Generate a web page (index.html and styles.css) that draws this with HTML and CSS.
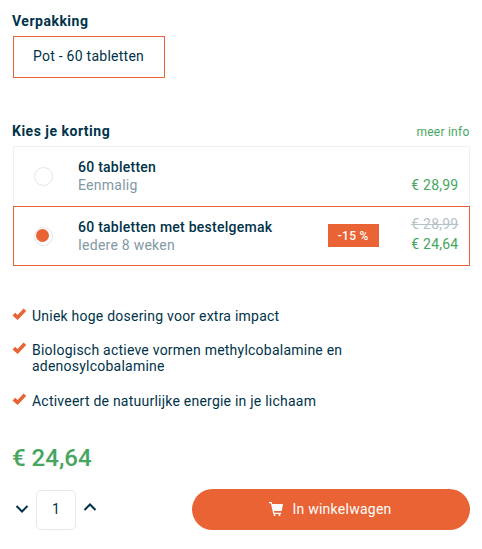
FILE: index.html
```html
<!DOCTYPE html>
<html lang="nl">
<head>
    <meta charset="UTF-8">
    <meta name="viewport" content="width=device-width, initial-scale=1.0">
    <title>Product bestellen</title>
    <link rel="stylesheet" href="styles.css">
</head>
<body>
    <form class="product-form">
        <h2>Verpakking</h2>
        <div class="package">Pot - 60 tabletten</div>

        <div class="discount-header">
            <h2>Kies je korting</h2>
            <a class="more-info">meer info</a>
        </div>

        <div class="options">
            <label class="option">
                <span class="radio"></span>
                <span class="option-text">
                    <strong>60 tabletten</strong>
                    <span class="option-sub">Eenmalig</span>
                </span>
                <span class="prices">
                    <span class="price">€ 28,99</span>
                </span>
            </label>
            <label class="option active">
                <span class="radio"></span>
                <span class="option-text">
                    <strong>60 tabletten met bestelgemak</strong>
                    <span class="option-sub">Iedere 8 weken</span>
                </span>
                <span class="badge">-15 %</span>
                <span class="prices">
                    <del class="old-price">€ 28,99</del>
                    <span class="price">€ 24,64</span>
                </span>
            </label>
        </div>

        <ul class="usps">
            <li>
                <svg class="check" viewBox="0 0 14 12"><path d="M.5 7.500 3.200 4.700 5.600 7.100 11.600.5 14.200 3 5.600 12z"/></svg>
                <span>Uniek hoge dosering voor extra impact</span>
            </li>
            <li>
                <svg class="check" viewBox="0 0 14 12"><path d="M.5 7.500 3.200 4.700 5.600 7.100 11.600.5 14.200 3 5.600 12z"/></svg>
                <span>Biologisch actieve vormen methylcobalamine en adenosylcobalamine</span>
            </li>
            <li>
                <svg class="check" viewBox="0 0 14 12"><path d="M.5 7.500 3.200 4.700 5.600 7.100 11.600.5 14.200 3 5.600 12z"/></svg>
                <span>Activeert de natuurlijke energie in je lichaam</span>
            </li>
        </ul>

        <div class="total">€ 24,64</div>

        <div class="order-row">
            <svg class="arrow arrow-down" viewBox="0 0 14 10"><path d="M1.500 2 7 7.500 12.500 2"/></svg>
            <div class="quantity">1</div>
            <svg class="arrow arrow-up" viewBox="0 0 14 10"><path d="M1.500 8 7 2.500 12.500 8"/></svg>
            <button type="button" class="cart-button">
                <svg class="cart" viewBox="0 0 14 14">
                    <path d="M0 0h2.700l.6 1.900H14l-1.300 7.200H4.900l.4 1.700h6.800v1.100H4.300L1.900 1.200H0z"/>
                    <circle cx="5.500" cy="13" r="1"/>
                    <circle cx="10.500" cy="13" r="1"/>
                </svg>
                In winkelwagen
            </button>
        </div>
    </form>
</body>
</html>
```
FILE: styles.css
```css
:root {
    --orange: #e96334;
    --green: #46a660;
    --text-dark: #003349;
    --text-light: #8299a4;
    --border: #f0f0f0;
}

* {
    box-sizing: border-box;
}

body {
    margin: 0;
    background-color: #fff;
    color: var(--text-dark);
    font-family: Roboto, "Liberation Sans", sans-serif;
    font-size: 14px;
    line-height: 18px;
    letter-spacing: 0.25px;
}

.product-form {
    padding: 12px 12px 0 12px;
}

h2 {
    margin: 0;
    font-size: 14px;
    font-weight: 700;
    line-height: 18px;
    letter-spacing: 0.5px;
}

.package {
    width: 152px;
    height: 42px;
    margin: 6px 0 0 1px;
    padding-left: 19px;
    border: 1px solid var(--orange);
    line-height: 39px;
}

.discount-header {
    display: flex;
    justify-content: space-between;
    margin-top: 44px;
}

.more-info {
    margin-right: 0.5px;
    color: var(--green);
    font-size: 12px;
    line-height: 20px;
}

.options {
    margin: 4px 0 0 1px;
}

.option {
    display: flex;
    align-items: center;
    height: 60px;
    padding: 0 10.5px 0 20px;
    border: 1px solid var(--border);
    border-bottom: none;
}

.option.active {
    border: 1px solid var(--orange);
}

.radio {
    display: flex;
    align-items: flex-start;
    width: 19px;
    height: 19px;
    padding: 1px;
    border: 1px solid #e6e6e6;
    border-radius: 50%;
}

.option.active .radio::before {
    content: "";
    width: 13px;
    height: 13px;
    border-radius: 50%;
    background: var(--orange);
}

.option-text {
    display: flex;
    flex: 1;
    flex-direction: column;
    margin-left: 25px;
    padding-bottom: 1px;
}

.option-text strong {
    font-weight: 500;
}

.option-sub {
    color: var(--text-light);
}

.badge {
    width: 51px;
    height: 23px;
    margin: 0 32.5px 1px 0;
    background: var(--orange);
    color: #fff;
    font-size: 12px;
    font-weight: 500;
    line-height: 24px;
    text-align: center;
}

.prices {
    display: flex;
    flex-direction: column;
    align-self: flex-end;
    padding-bottom: 11px;
    color: var(--green);
    line-height: 20px;
}

.old-price {
    color: #b3c1c8;
}

.usps {
    margin: 42px 0 0;
    padding: 0;
    list-style: none;
    letter-spacing: 0.23px;
}

.usps li {
    display: flex;
    width: 360px;
    margin-bottom: 18.4px;
    line-height: 16px;
}

.check {
    flex: none;
    width: 14px;
    height: 12px;
    margin: 0 6px 0 0;
    fill: var(--orange);
    overflow: visible;
}

.total {
    margin-top: 34px;
    color: var(--green);
    font-size: 24px;
    font-weight: 500;
    line-height: 30px;
    letter-spacing: 0;
}

.order-row {
    display: flex;
    align-items: center;
    height: 41px;
    margin-top: 16px;
}

.arrow {
    width: 14px;
    height: 10px;
    fill: none;
    stroke: var(--text-dark);
    stroke-width: 2;
}

.arrow-down {
    margin: 0 7px 0 3px;
}

.arrow-up {
    margin: -4px 0 0 7px;
}

.quantity {
    align-self: flex-end;
    width: 40px;
    height: 40px;
    border: 1px solid #e6e6e6;
    border-radius: 5px;
    line-height: 37px;
    text-align: center;
}

.cart-button {
    display: flex;
    justify-content: center;
    align-items: center;
    width: 278px;
    height: 41px;
    margin-left: auto;
    padding: 0 1px 0 0;
    border: none;
    border-radius: 21px;
    background: var(--orange);
    color: #fff;
    font: inherit;
    letter-spacing: inherit;
    cursor: pointer;
}

.cart {
    width: 14px;
    height: 14px;
    margin-right: 9px;
    fill: #fff;
}
```
